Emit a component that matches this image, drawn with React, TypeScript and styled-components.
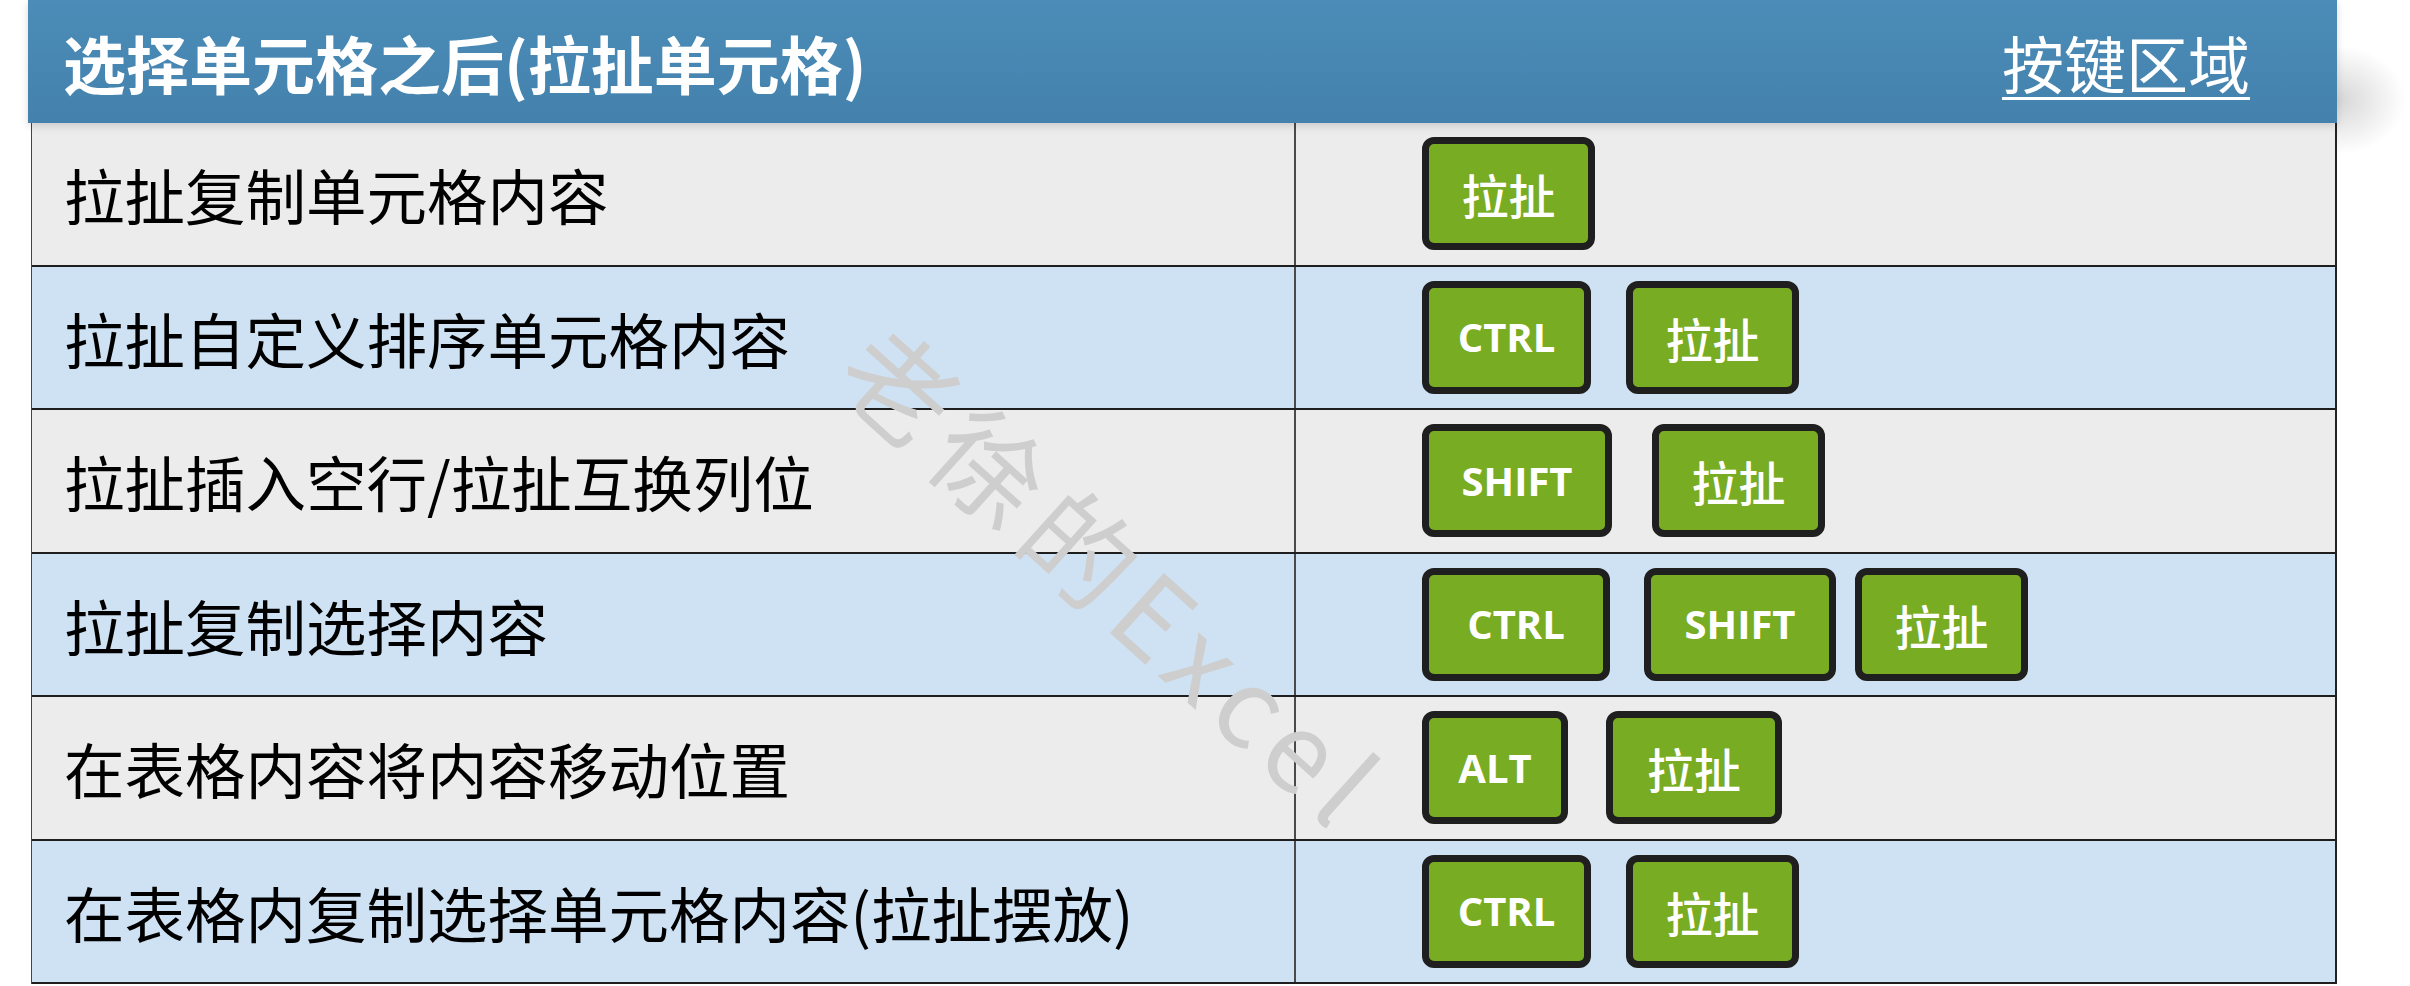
import React from 'react';
import styled, { createGlobalStyle } from 'styled-components';

const GlobalStyle = createGlobalStyle`
    html, body {
        margin: 0;
        padding: 0;
        background: #ffffff;
    }

    body {
        font-family: "Noto Sans CJK SC", "Noto Sans", sans-serif;
    }
`;

const Frame = styled.div`
    position: relative;
    width: 2410px;
    height: 986px;
    box-sizing: border-box;
    padding: 0 73px 0 28px;
    overflow: hidden;
`;

const Header = styled.header`
    position: relative;
    z-index: 1;
    height: 123px;
    display: flex;
    align-items: center;
    justify-content: space-between;
    padding: 0 87px 0 35px;
    background: linear-gradient(#4b8db8, #4481ad);
    box-shadow: 0 3px 8px rgba(0, 0, 0, 0.14);
    color: #ffffff;

    &::after {
        content: '';
        position: absolute;
        right: -70px;
        top: 45px;
        width: 70px;
        height: 110px;
        background: radial-gradient(
            ellipse at 0% 50%,
            rgba(0, 0, 0, 0.16),
            rgba(0, 0, 0, 0) 70%
        );
    }
`;

const Title = styled.h1`
    margin: 0;
    font-size: 63px;
    font-weight: 700;
    line-height: 1;
`;

const AreaLink = styled.span`
    font-size: 62px;
    font-weight: 400;
    line-height: 1;
    text-decoration: underline;
    text-decoration-thickness: 3px;
    text-underline-offset: 8px;
`;

const Table = styled.div`
    margin-left: 3px;
    border-left: 1px solid #444444;
    border-right: 2px solid #222222;
`;

const Row = styled.div<{ $tone: 'gray' | 'blue' }>`
    display: grid;
    grid-template-columns: 1264px 1fr;
    height: 143.5px;
    box-sizing: border-box;
    border-bottom: 2px solid #1e1e1e;
    background: ${(p) => (p.$tone === 'gray' ? '#ececec' : '#cfe2f3')};
`;

const Action = styled.div`
    display: flex;
    align-items: center;
    padding-left: 32px;
    border-right: 2px solid #4a4a4a;
    font-size: 60.5px;
    color: #000000;
    white-space: nowrap;
`;

const Keys = styled.div`
    display: flex;
    align-items: center;
    padding-left: 126px;
`;

const Key = styled.div<{ $w: number; $gap: number; $latin: boolean }>`
    box-sizing: border-box;
    width: ${(p) => p.$w}px;
    height: 113px;
    margin-left: ${(p) => p.$gap}px;
    display: flex;
    align-items: center;
    justify-content: center;
    border: 7px solid #1f1f1f;
    border-radius: 12px;
    background: #78ac22;
    color: #ffffff;
    font-family: ${(p) =>
        p.$latin ? '"Open Sans", "Noto Sans", sans-serif' : '"Noto Sans CJK SC", sans-serif'};
    font-size: ${(p) => (p.$latin ? 40 : 47)}px;
    font-weight: ${(p) => (p.$latin ? 700 : 500)};
    line-height: 1;
`;

const Watermark = styled.div`
    position: absolute;
    z-index: 2;
    left: 862px;
    top: 290px;
    transform-origin: 0 50%;
    transform: rotate(42deg);
    font-size: 110px;
    line-height: 110px;
    letter-spacing: 12px;
    color: #cecece;
    white-space: nowrap;
    pointer-events: none;
`;

type KeyCap = { label: string; w: number; gap: number };

const rows: { action: string; keys: KeyCap[] }[] = [
    { action: '拉扯复制单元格内容', keys: [{ label: '拉扯', w: 173, gap: 0 }] },
    {
        action: '拉扯自定义排序单元格内容',
        keys: [
            { label: 'CTRL', w: 169, gap: 0 },
            { label: '拉扯', w: 173, gap: 35 },
        ],
    },
    {
        action: '拉扯插入空行/拉扯互换列位',
        keys: [
            { label: 'SHIFT', w: 190, gap: 0 },
            { label: '拉扯', w: 173, gap: 40 },
        ],
    },
    {
        action: '拉扯复制选择内容',
        keys: [
            { label: 'CTRL', w: 188, gap: 0 },
            { label: 'SHIFT', w: 192, gap: 34 },
            { label: '拉扯', w: 173, gap: 19 },
        ],
    },
    {
        action: '在表格内容将内容移动位置',
        keys: [
            { label: 'ALT', w: 146, gap: 0 },
            { label: '拉扯', w: 176, gap: 38 },
        ],
    },
    {
        action: '在表格内复制选择单元格内容(拉扯摆放)',
        keys: [
            { label: 'CTRL', w: 169, gap: 0 },
            { label: '拉扯', w: 173, gap: 35 },
        ],
    },
];

function App(): React.ReactElement {
    return (
        <Frame>
            <GlobalStyle />
            <Header>
                <Title>选择单元格之后(拉扯单元格)</Title>
                <AreaLink>按键区域</AreaLink>
            </Header>
            <Table>
                {rows.map((row, i) => (
                    <Row key={row.action} $tone={i % 2 === 0 ? 'gray' : 'blue'}>
                        <Action>{row.action}</Action>
                        <Keys>
                            {row.keys.map((k, j) => (
                                <Key
                                    key={j}
                                    $w={k.w}
                                    $gap={k.gap}
                                    $latin={/^[A-Z]+$/.test(k.label)}
                                >
                                    {k.label}
                                </Key>
                            ))}
                        </Keys>
                    </Row>
                ))}
            </Table>
            <Watermark>老徐的Excel</Watermark>
        </Frame>
    );
}

export default App;
